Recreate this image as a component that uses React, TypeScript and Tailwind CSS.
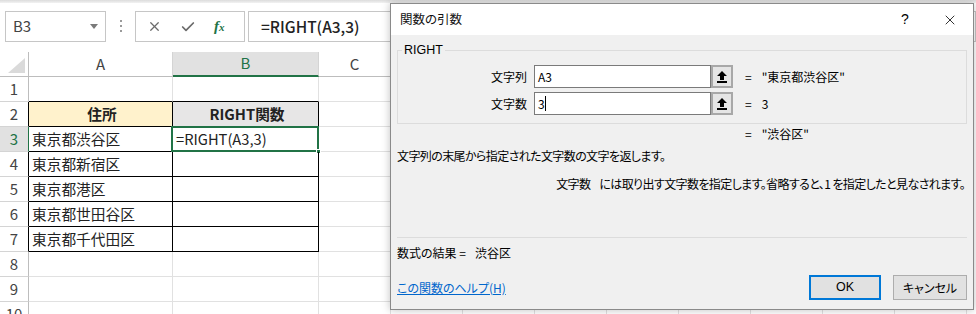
import { Check, X } from 'lucide-react';

const jp = "font-['Noto_Sans_CJK_JP','Noto_Sans',sans-serif]";

type Row = { n: number; a?: string; b?: string };

const rows: Row[] = [
  { n: 1 },
  { n: 2, a: '住所', b: 'RIGHT関数' },
  { n: 3, a: '東京都渋谷区', b: '=RIGHT(A3,3)' },
  { n: 4, a: '東京都新宿区' },
  { n: 5, a: '東京都港区' },
  { n: 6, a: '東京都世田谷区' },
  { n: 7, a: '東京都千代田区' },
  { n: 8 },
  { n: 9 },
  { n: 10 },
];

const extraCols = ['C', 'D', 'E', 'F', 'G', 'H', 'I', 'J', 'K'];

function UploadIcon() {
  return (
    <svg width="10" height="12" viewBox="0 0 10 12">
      <path d="M5 0 L10 5 L7 5 L7 9 L3 9 L3 5 L0 5 Z" fill="#000" />
      <rect x="0" y="10" width="10" height="2" fill="#000" />
    </svg>
  );
}

function ArgRow({ label, value, result, caret }: { label: string; value: string; result: string; caret?: boolean }) {
  return (
    <div className="flex items-center h-[23px]">
      <div className="w-[129px] text-right">{label}</div>
      <div className="ml-[7px] w-[177px] h-[23px] bg-white border border-[#7a7a7a] flex items-center pl-[3px]">
        <span>{value}</span>
        {caret && <span className="w-px h-[15px] bg-black" />}
      </div>
      <div className="w-[22px] h-[23px] bg-[#e5e5e5] border-2 border-[#a8a8a8] flex items-center justify-center">
        <UploadIcon />
      </div>
      <span className="ml-[12px]">=</span>
      <span className="ml-[10px]">{result}</span>
    </div>
  );
}

function Sheet() {
  return (
    <div className={`${jp} text-[#222]`}>
      {/* column headers */}
      <div className="flex h-[25px] text-[15px] text-[#444]">
        <div className="w-[29px] shrink-0 border-r border-b border-[#bdbdbd] flex items-end justify-end pr-[3px] pb-[3px]">
          <svg width="17" height="15" viewBox="0 0 17 15">
            <path d="M17 0 L17 15 L0 15 Z" fill="#dadada" />
          </svg>
        </div>
        <div className="w-[144px] shrink-0 border-r border-b border-r-[#d4d4d4] border-b-[#bdbdbd] flex items-center justify-center">A</div>
        <div className="w-[146px] shrink-0 border-r border-b-2 border-r-[#d4d4d4] border-b-[#217346] bg-[#e1e1e1] text-[#217346] flex items-center justify-center">B</div>
        {extraCols.map((c, i) => (
          <div key={c} className="w-[72px] shrink-0 border-r border-b border-r-[#d4d4d4] border-b-[#bdbdbd] flex items-center justify-center">
            {i === 0 ? c : ''}
          </div>
        ))}
      </div>
      {rows.map((r) => {
        const inTable = r.n >= 2 && r.n <= 7;
        const head = r.n === 2;
        const sel = r.n === 3;
        return (
          <div key={r.n} className="flex h-[25px] text-[14.7px]">
            <div
              className={`w-[29px] shrink-0 border-r border-b border-b-[#d4d4d4] flex items-center justify-center text-[15px] ${
                sel
                  ? 'bg-[#e1e1e1] text-[#217346] border-r-[#217346]'
                  : inTable
                  ? 'text-[#444] border-r-black'
                  : 'text-[#444] border-r-[#bdbdbd]'
              }`}
            >
              {r.n}
            </div>
            <div
              className={`w-[144px] shrink-0 border-r border-b flex items-center pl-[3px] ${
                inTable ? 'border-black' : r.n === 1 ? 'border-r-[#e1e1e1] border-b-black' : 'border-[#e1e1e1]'
              } ${head ? 'bg-[#fff2cc] justify-center font-bold pl-0' : ''}`}
            >
              {r.a}
            </div>
            <div
              className={`relative w-[146px] shrink-0 border-r border-b flex items-center pl-[3px] ${
                inTable ? 'border-black' : r.n === 1 ? 'border-r-[#e1e1e1] border-b-black' : 'border-[#e1e1e1]'
              } ${head ? 'bg-[#e7e6e6] justify-center font-bold pl-0' : ''}`}
            >
              {r.b}
              {sel && (
                <>
                  <div className="absolute -left-[2px] -top-[1px] -right-px -bottom-px border-2 border-[#217346]" />
                  <div className="absolute -right-[3px] -bottom-[3px] w-[5px] h-[5px] bg-[#217346] border border-white" />
                </>
              )}
            </div>
            {extraCols.map((c) => (
              <div key={c} className="w-[72px] shrink-0 border-r border-b border-[#e1e1e1]" />
            ))}
          </div>
        );
      })}
    </div>
  );
}

function FormulaBar() {
  return (
    <div className={`${jp}`}>
      <div className="h-[3px] bg-gradient-to-b from-[#dcdcdc] to-[#f2f2f2]" />
      <div className="h-[49px] flex items-start pt-[8px] pl-[5px]">
        <div className="w-[101px] h-[31px] border border-[#c6c6c6] bg-white flex items-center pl-[7px] pr-[7px] justify-between">
          <span className="text-[15px] text-[#444]">B3</span>
          <svg width="8" height="5" viewBox="0 0 8 5">
            <path d="M0 0 L8 0 L4 5 Z" fill="#7a7a7a" />
          </svg>
        </div>
        <div className="ml-[14px] mt-[9px] flex flex-col gap-[3px]">
          <div className="w-[2px] h-[2px] bg-[#9a9a9a]" />
          <div className="w-[2px] h-[2px] bg-[#9a9a9a]" />
          <div className="w-[2px] h-[2px] bg-[#9a9a9a]" />
        </div>
        <div className="ml-[13px] w-[110px] h-[31px] border border-[#c6c6c6] bg-white flex items-center">
          <X size={15} strokeWidth={2} className="ml-[11px] text-[#6b6b6b]" />
          <Check size={16} strokeWidth={2.6} className="ml-[18px] text-[#6b6b6b]" />
          <span className="ml-[18px] italic font-bold font-['Liberation_Serif',serif] text-[15px] text-[#217346] leading-none">
            f<span className="text-[11px]">x</span>
          </span>
        </div>
        <div className="ml-[3px] flex-1 h-[31px] border border-[#c6c6c6] bg-white flex items-center pl-[12px]">
          <span className="text-[15.5px] font-medium text-[#222]">=RIGHT(A3,3)</span>
        </div>
      </div>
    </div>
  );
}

function Dialog() {
  return (
    <div
      className={`absolute left-[390px] top-[3px] w-[584px] h-[307px] border border-[#8a8a8a] bg-[#f0f0f0] shadow-[0_0_8px_rgba(0,0,0,0.25)] ${jp} text-[12px] text-black [font-feature-settings:'palt'] flex flex-col`}
    >
      <div className="h-[31px] bg-white flex items-center shrink-0">
        <span className="pl-[9px] flex-1 text-[12.5px] text-[#111]">関数の引数</span>
        <span className="w-[20px] text-center text-[14px] mr-[12px] font-['Liberation_Sans',sans-serif]">?</span>
        <div className="w-[46px] flex items-center justify-center">
          <X size={16} strokeWidth={1.2} />
        </div>
      </div>
      <div className="flex-1 flex flex-col px-[6px] leading-[17px]">
        <fieldset className="mt-[7px] border border-[#dcdcdc] pb-[8px] flex flex-col gap-[4px]">
          <legend className="ml-[4px] px-[2px] leading-[16px] text-[12.5px] font-['Liberation_Sans',sans-serif]">RIGHT</legend>
          <div className="mt-[3px]" />
          <ArgRow label="文字列" value="A3" result={'"東京都渋谷区"'} />
          <ArgRow label="文字数" value="3" result="3" caret />
        </fieldset>
        <div className="mt-[1px] h-[17px] flex">
          <span className="ml-[348px]">=</span>
          <span className="ml-[10px]">"渋谷区"</span>
        </div>
        <div className="mt-[5px] h-[17px] tracking-[-0.6px]">文字列の末尾から指定された文字数の文字を返します。</div>
        <div className="mt-[11px] h-[17px] text-right pr-[2px] tracking-[-0.6px]">
          <span>文字数</span>
          <span className="ml-[9px]">には取り出す文字数を指定します。省略すると、1 を指定したと見なされます。</span>
        </div>
        <div className="mt-[45px] border-t border-[#dcdcdc]" />
        <div className="mt-[6px] h-[17px]">
          数式の結果 =<span className="ml-[9px]">渋谷区</span>
        </div>
        <div className="mt-[14px] h-[25px] flex items-center">
          <span className="flex-1 text-[#0066cc] underline">この関数のヘルプ(H)</span>
          <div className="w-[72px] h-[25px] border-2 border-[#0078d7] bg-[#e1e1e1] flex items-center justify-center font-['Liberation_Sans',sans-serif] text-[12.5px]">
            OK
          </div>
          <div className="ml-[12px] w-[74px] h-[25px] border border-[#adadad] bg-[#e1e1e1] flex items-center justify-center">
            キャンセル
          </div>
        </div>
      </div>
    </div>
  );
}

export default function App() {
  return (
    <div className="relative w-[976px] h-[314px] overflow-hidden bg-white">
      <FormulaBar />
      <Sheet />
      <Dialog />
    </div>
  );
}
